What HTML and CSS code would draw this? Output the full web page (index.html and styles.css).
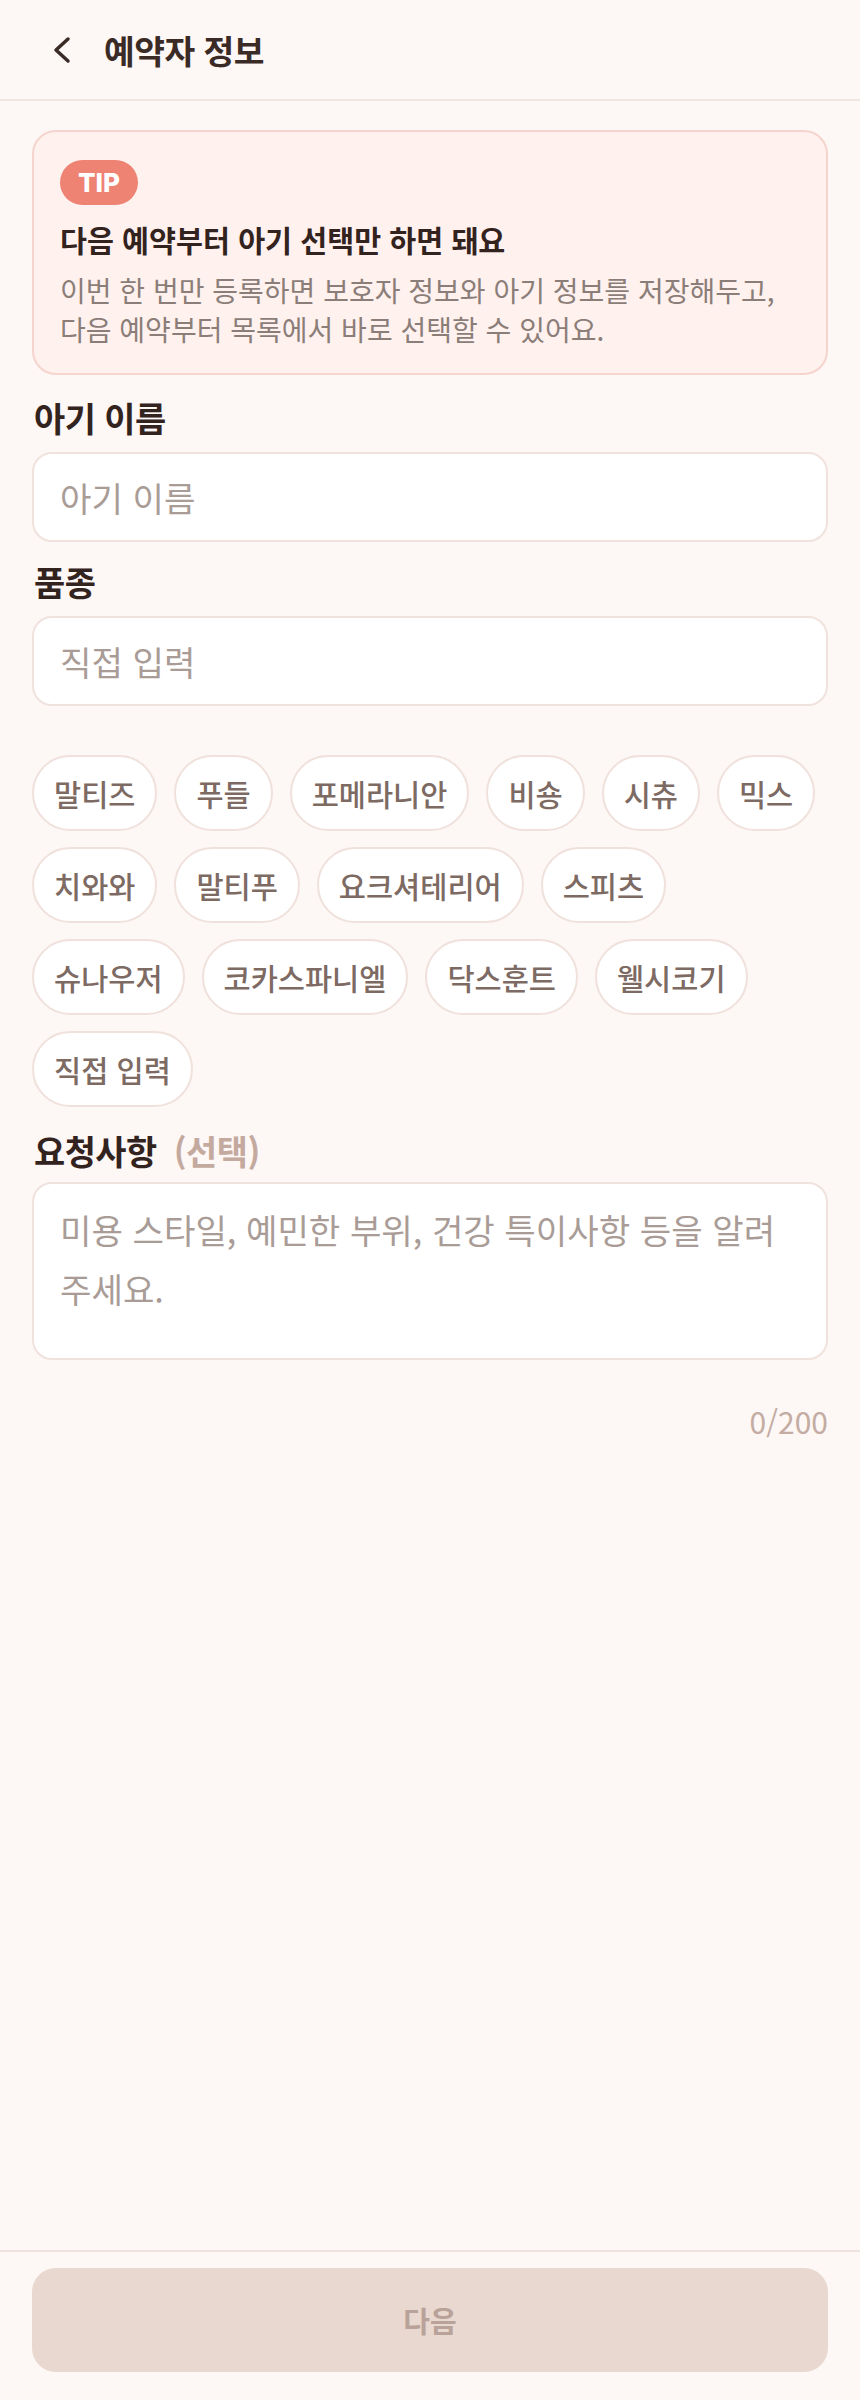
FILE: index.html
```html
<!DOCTYPE html>
<html lang="ko">
<head>
<meta charset="utf-8">
<title>예약자 정보</title>
<link rel="stylesheet" href="styles.css">
</head>
<body>
<div class="page">
  <header class="topbar">
    <button class="back" aria-label="뒤로">
      <svg width="24" height="32" viewBox="0 0 24 32"><path d="M18 5 L6 16 L18 27" fill="none" stroke="#3a2b27" stroke-width="3.5" stroke-linecap="round" stroke-linejoin="round"/></svg>
    </button>
    <h1 class="title">예약자 정보</h1>
  </header>

  <main class="content">
    <section class="tip">
      <span class="tip-badge">TIP</span>
      <p class="tip-title">다음 예약부터 아기 선택만 하면 돼요</p>
      <p class="tip-desc">이번 한 번만 등록하면 보호자 정보와 아기 정보를 저장해두고,<br>다음 예약부터 목록에서 바로 선택할 수 있어요.</p>
    </section>

    <div class="field">
      <label class="label">아기 이름</label>
      <div class="input"><span class="placeholder">아기 이름</span></div>
    </div>

    <div class="field">
      <label class="label">품종</label>
      <div class="input"><span class="placeholder">직접 입력</span></div>
    </div>

    <div class="chips">
      <span class="chip">말티즈</span>
      <span class="chip">푸들</span>
      <span class="chip">포메라니안</span>
      <span class="chip">비숑</span>
      <span class="chip">시츄</span>
      <span class="chip">믹스</span>
      <span class="chip">치와와</span>
      <span class="chip">말티푸</span>
      <span class="chip">요크셔테리어</span>
      <span class="chip">스피츠</span>
      <span class="chip">슈나우저</span>
      <span class="chip">코카스파니엘</span>
      <span class="chip">닥스훈트</span>
      <span class="chip">웰시코기</span>
      <span class="chip">직접 입력</span>
    </div>

    <div class="field field-request">
      <label class="label">요청사항 <span class="optional">(선택)</span></label>
      <div class="textarea"><span class="placeholder">미용 스타일, 예민한 부위, 건강 특이사항 등을 알려 주세요.</span></div>
      <div class="counter">0/200</div>
    </div>
  </main>

  <footer class="bottom">
    <button class="next">다음</button>
  </footer>
</div>
</body>
</html>
```

FILE: styles.css
```css
* { box-sizing: border-box; }
html, body { margin: 0; padding: 0; }
body {
  background: #fdf7f5;
  font-family: "Noto Sans CJK KR", "Noto Sans", sans-serif;
  color: #36261f;
}
p { margin: 0; }
.page {
  min-height: 2400px;
  display: flex;
  flex-direction: column;
}
.topbar {
  height: 101px;
  border-bottom: 2px solid #f1e5e0;
  display: flex;
  align-items: center;
  padding-left: 50px;
  gap: 30px;
}
.back {
  border: 0;
  background: none;
  padding: 0;
  width: 24px;
  height: 32px;
  display: flex;
}
.title {
  margin: 0;
  font-size: 33.4px;
  line-height: 44px;
  font-weight: 700;
  color: #3a2b27;
  letter-spacing: -0.5px;
}
.content {
  flex: 1;
  padding: 29px 32px 0;
}
.tip {
  background: #fff1ee;
  border: 2px solid #f4d4cc;
  border-radius: 24px;
  padding: 28px 26px 25px;
}
.tip-badge {
  display: inline-flex;
  align-items: center;
  height: 45px;
  padding: 0 18px;
  border-radius: 23px;
  background: #ee8273;
  color: #fff;
  font-family: Inter, "Noto Sans", sans-serif;
  font-weight: 800;
  font-size: 26px;
}
.tip-title {
  margin-top: 13px;
  font-size: 29.3px;
  line-height: 42px;
  font-weight: 700;
  color: #33231e;
}
.tip-desc {
  margin-top: 11px;
  font-size: 28px;
  line-height: 38.5px;
  color: #8b7d78;
}
.field { margin-top: 21px; }
.field + .field { margin-top: 18px; }
.label {
  display: block;
  padding-left: 2px;
  font-size: 33.9px;
  line-height: 44px;
  font-weight: 700;
  color: #33231e;
  letter-spacing: -0.5px;
}
.optional {
  color: #c4a99f;
  margin-left: 8px;
}
.input {
  margin-top: 12px;
  height: 90px;
  background: #fff;
  border: 2px solid #f0e2dd;
  border-radius: 20px;
  display: flex;
  align-items: center;
  padding: 0 26px;
}
.placeholder {
  font-size: 34.2px;
  color: #a99c97;
}
.chips {
  margin-top: 49px;
  display: flex;
  flex-wrap: wrap;
  gap: 16px 17px;
}
.chip {
  height: 76px;
  display: inline-flex;
  align-items: center;
  padding: 0 20px;
  border: 2px solid #f0e1dc;
  border-radius: 38px;
  background: #fff;
  font-size: 29.5px;
  font-weight: 500;
  color: #7d6a63;
}
.field-request { margin-top: 22px; }
.textarea {
  margin-top: 9px;
  height: 178px;
  background: #fff;
  border: 2px solid #f0e2dd;
  border-radius: 20px;
  padding: 20px 26px;
  line-height: 51px;
}
.textarea .placeholder { font-size: 34.2px; }
.counter {
  margin-top: 40px;
  text-align: right;
  font-size: 30px;
  line-height: 42px;
  color: #c4aca3;
}
.bottom {
  border-top: 2px solid #f1e3de;
  padding: 16px 32px 28px;
}
.next {
  width: 100%;
  height: 104px;
  border: 0;
  border-radius: 24px;
  background: #e8d8d0;
  font-family: "Noto Sans CJK KR", "Noto Sans", sans-serif;
  font-size: 29px;
  font-weight: 700;
  color: #b9a299;
}
```
